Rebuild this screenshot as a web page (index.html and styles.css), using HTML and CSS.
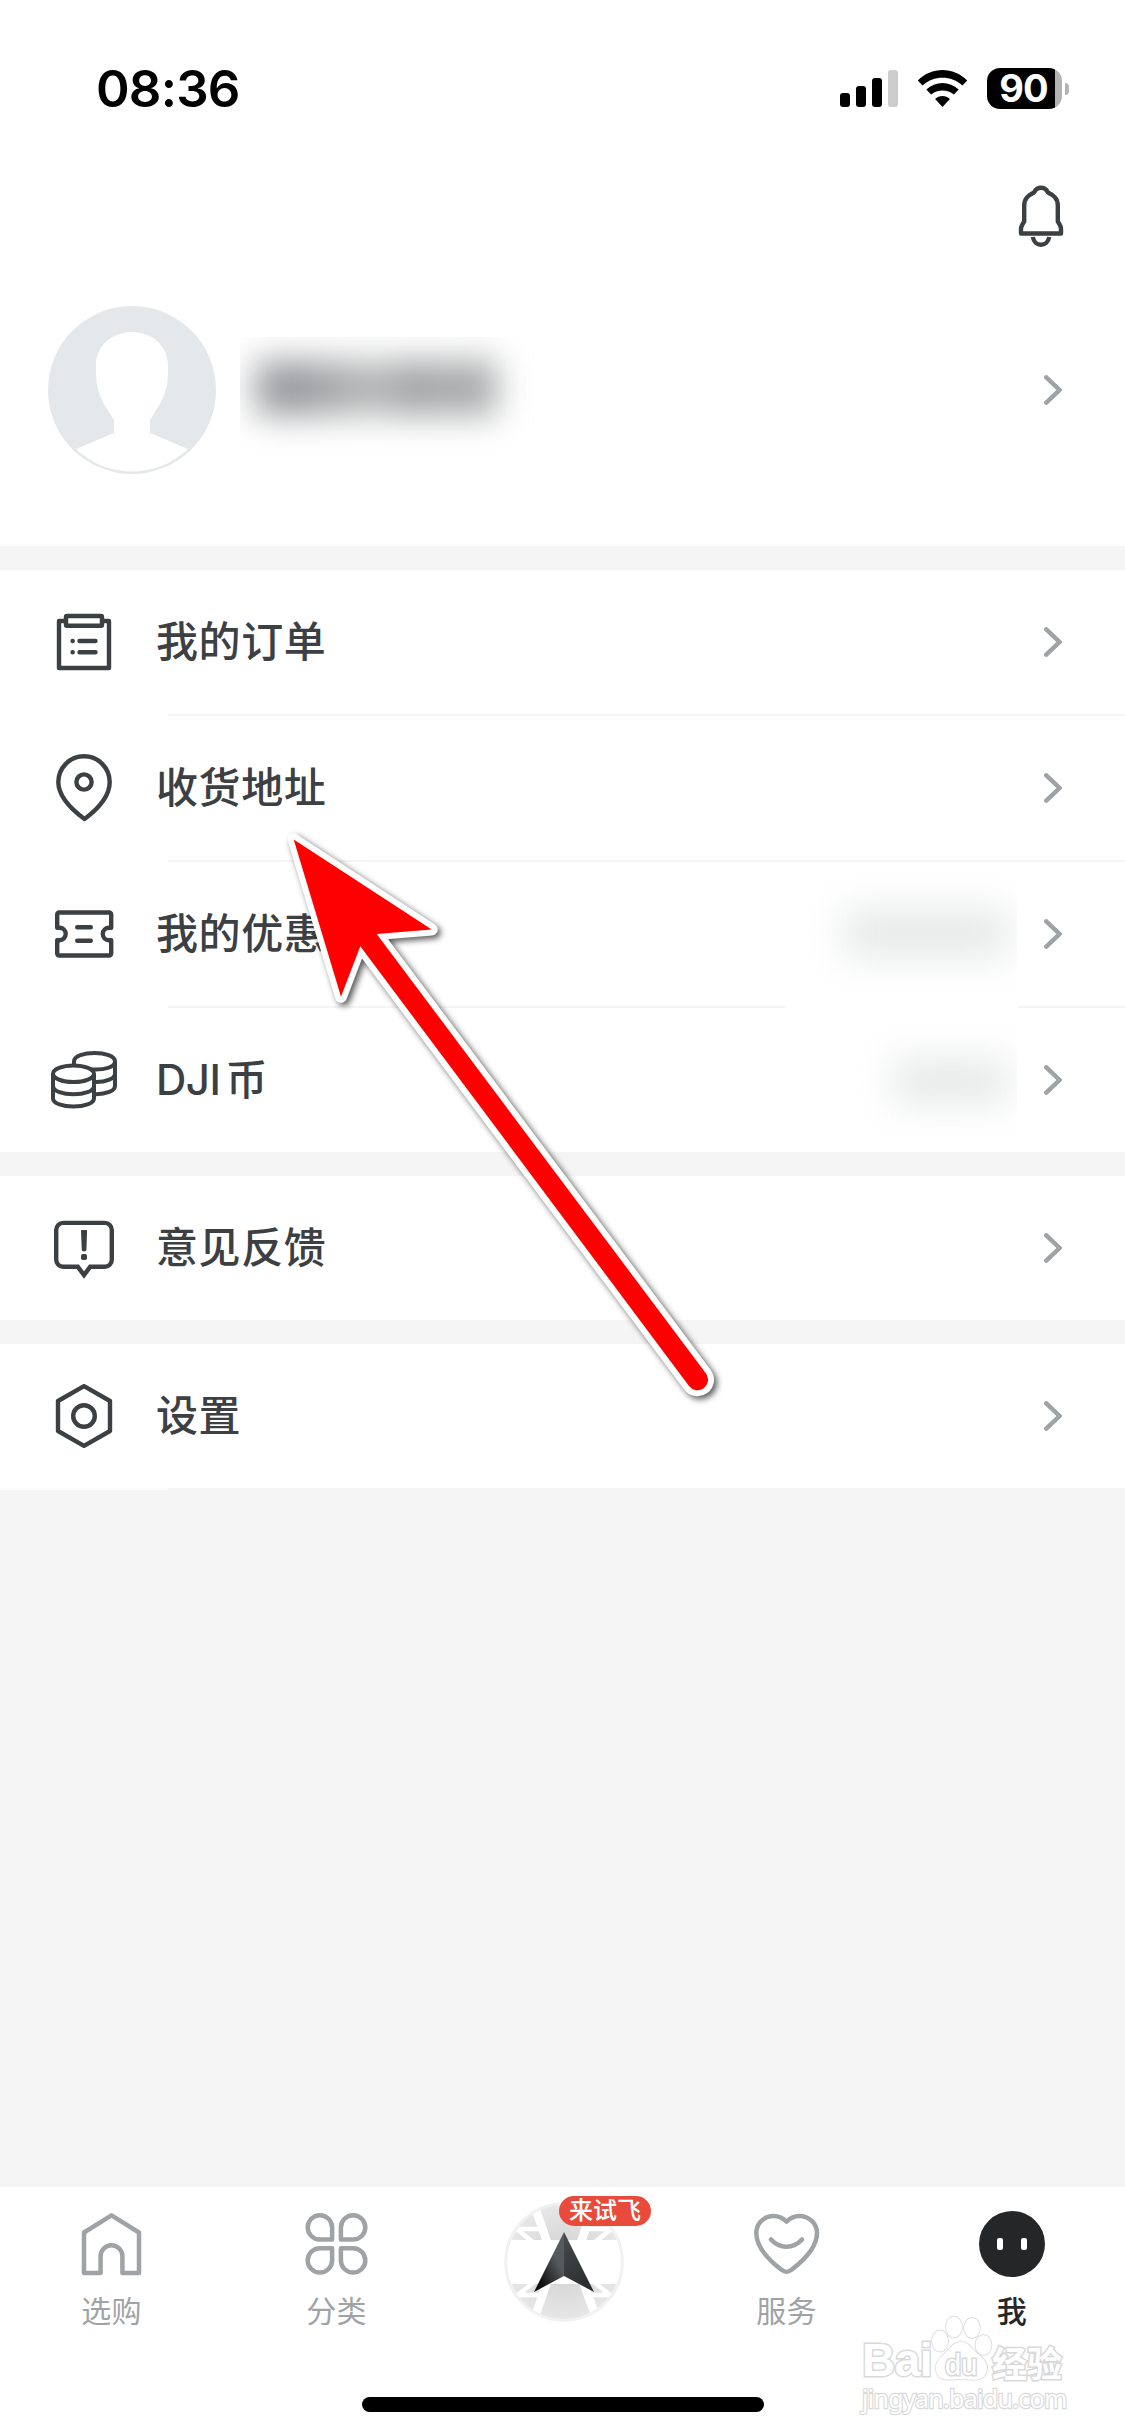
FILE: index.html
```html
<!DOCTYPE html>
<html lang="zh-CN">
<head>
    <meta charset="UTF-8">
    <meta name="viewport" content="width=device-width, initial-scale=1.0">
    <title>我</title>
    <link rel="stylesheet" href="styles.css">
</head>
<body>

    <div class="app">
        <header class="header">
            <div class="status-bar">
                <span class="time">08:36</span>
                <div class="status-icons">
                    <svg class="signal" viewBox="0 0 58 37">
                        <rect x="0" y="23" width="10" height="14" rx="3"/>
                        <rect x="16" y="16" width="10" height="21" rx="3"/>
                        <rect x="32" y="8" width="10" height="29" rx="3"/>
                        <rect x="48" y="0" width="10" height="37" rx="3" fill="#ccc"/>
                    </svg>
                    <svg class="wifi" viewBox="0 0 50 37">
                        <path d="M0.3 10.5 C14 -3.5 36 -3.5 49.7 10.5 L45 15.5 C34 5 16 5 5 15.5 Z"/>
                        <path d="M8.8 19.6 C18 10.8 32 10.8 41.2 19.6 L36.4 24.6 C30 19 20 19 13.6 24.6 Z"/>
                        <path d="M17.6 29 C21.5 24.9 28.5 24.9 32.4 29 L25 37 Z"/>
                    </svg>
                    <div class="battery"><span>90</span></div>
                    <div class="battery-cap"></div>
                </div>
            </div>

            <div class="toolbar">
                <svg class="icon" viewBox="0 0 72 72">
                    <path d="M36 7.8 C40 7.8 41.5 9.5 43 12.5 C48 15 52.8 18 52.8 25.5 V41.5 C54.5 44 56 46.5 56 49 V53.5 H16 V49 C16 46.5 17.5 44 19.2 41.5 V25.5 C19.2 18 24 15 29 12.5 C30.5 9.5 32 7.8 36 7.8 Z"/>
                    <path stroke-linecap="butt" d="M27.8 57 C29.5 67.3 42.5 67.3 44.2 57"/>
                </svg>
            </div>

            <div class="profile">
                <svg class="avatar" viewBox="0 0 168 168">
                    <circle cx="84" cy="84" r="84" fill="#e4e8eb"/>
                    <path fill="#fff" d="M84 26 C105 26 120 41 120 59 V68 C120 87 112 98 102 114 V127 L140 143 C109 173 59 173 28 143 L66 127 V114 C56 98 48 87 48 68 V59 C48 41 63 26 84 26 Z"/>
                </svg>
                <div class="hidden-name">
                    <div class="smudge"></div>
                </div>
                <svg class="chevron" viewBox="0 0 18 30"><path d="M2.3 2.3 L15.5 15 L2.3 27.7"/></svg>
            </div>
        </header>

        <main class="menu">
            <section class="group">
                <div class="item">
                    <svg class="icon" viewBox="0 0 72 72">
                        <path d="M18 15 H11 V62 H61 V15 H54"/>
                        <rect x="18" y="10" width="36" height="9.7" rx="1"/>
                        <path d="M24.6 35 h.1 M24.6 46.2 h.1 M31.5 35 H47.5 M31.5 46.2 H47.5"/>
                    </svg>
                    <span class="label">我的订单</span>
                    <svg class="chevron" viewBox="0 0 18 30"><path d="M2.3 2.3 L15.5 15 L2.3 27.7"/></svg>
                </div>
                <div class="item">
                    <svg class="icon" viewBox="0 0 72 72">
                        <path d="M36.5 67 C25 58.5 10.3 45 10.3 30 A25.7 25.7 0 0 1 61.7 30 C61.7 45 48 58.5 36.5 67 Z"/>
                        <circle cx="36" cy="30" r="7.6"/>
                    </svg>
                    <span class="label">收货地址</span>
                    <svg class="chevron" viewBox="0 0 18 30"><path d="M2.3 2.3 L15.5 15 L2.3 27.7"/></svg>
                </div>
                <div class="item">
                    <svg class="icon" viewBox="0 0 72 72">
                        <path d="M9.2 29.8 V16.5 a2 2 0 0 1 2 -2 H61.2 a2 2 0 0 1 2 2 V29.8 H61 a6.2 6.2 0 0 0 0 12.4 H63.2 V55.5 a2 2 0 0 1 -2 2 H11.2 a2 2 0 0 1 -2 -2 V42.2 H11.5 a6.2 6.2 0 0 0 0 -12.4 Z"/>
                        <path d="M29.2 29.2 H42.8 M29.2 42.8 H42.8"/>
                    </svg>
                    <span class="label">我的优惠</span>
                    <div class="hidden-value"><div class="smudge"></div></div>
                    <svg class="chevron" viewBox="0 0 18 30"><path d="M2.3 2.3 L15.5 15 L2.3 27.7"/></svg>
                </div>
                <div class="item">
                    <svg class="icon coins" viewBox="0 0 72 72">
                        <ellipse cx="25.5" cy="29.7" rx="20.5" ry="8.3"/>
                        <path d="M5 29.7 V54.2 C5 65.3 46 65.3 46 54.2 V29.7"/>
                        <path d="M5 42 C5 53.1 46 53.1 46 42"/>
                        <path d="M26 22 V17.4 C26 6.3 67 6.3 67 17.4 C67 23 57 26.3 42 25.2"/>
                        <path d="M67 17.4 V42 C67 47 58 50.2 48 50.2"/>
                        <path d="M67 29.7 C67 34.5 58 38 48 38"/>
                    </svg>
                    <span class="label"><span class="latin">DJI</span>币</span>
                    <div class="hidden-value short"><div class="smudge"></div></div>
                    <svg class="chevron" viewBox="0 0 18 30"><path d="M2.3 2.3 L15.5 15 L2.3 27.7"/></svg>
                </div>
            </section>

            <section class="group">
                <div class="item">
                    <svg class="icon" viewBox="0 0 72 72">
                        <path stroke-linejoin="miter" d="M15.2 10.9 H56.8 a7 7 0 0 1 7 7 V47.8 a7 7 0 0 1 -7 7 H42.2 L36 63 L29.8 54.8 H15.2 a7 7 0 0 1 -7 -7 V17.9 a7 7 0 0 1 7 -7 Z"/>
                        <path class="solid" d="M33.9 18 H38.3 Q39.2 18 39.1 19 L38.4 38 Q38.3 39.3 37 39.3 H35.2 Q33.9 39.3 33.8 38 L33 19 Q33 18 33.9 18 Z"/>
                        <rect class="solid" x="33" y="42" width="6" height="6" rx="1.8"/>
                    </svg>
                    <span class="label">意见反馈</span>
                    <svg class="chevron" viewBox="0 0 18 30"><path d="M2.3 2.3 L15.5 15 L2.3 27.7"/></svg>
                </div>
            </section>

            <section class="group last">
                <div class="item">
                    <svg class="icon" viewBox="0 0 72 72">
                        <path d="M36 6.2 L62 21 V51 L36 65.8 L10 51 V21 Z"/>
                        <circle cx="36" cy="36" r="10.8"/>
                    </svg>
                    <span class="label">设置</span>
                    <svg class="chevron" viewBox="0 0 18 30"><path d="M2.3 2.3 L15.5 15 L2.3 27.7"/></svg>
                </div>
            </section>
        </main>

        <footer class="footer">
            <nav class="tabs">
                <div class="tab">
                    <svg class="tab-icon" viewBox="0 0 66 66">
                        <path d="M32.5 4.3 L60 21.5 V62 H43.4 V45.2 a10.9 10.9 0 0 0 -21.8 0 V62 H5 V21.5 Z"/>
                    </svg>
                    <span>选购</span>
                </div>
                <div class="tab">
                    <svg class="tab-icon" viewBox="0 0 66 66">
                        <path d="M15.9 4.2 a12.2 12.2 0 0 0 0 24.4 H28.1 V16.4 A12.2 12.2 0 0 0 15.9 4.2 Z"/>
                        <path d="M49.1 4.2 a12.2 12.2 0 0 1 0 24.4 H36.9 V16.4 A12.2 12.2 0 0 1 49.1 4.2 Z"/>
                        <path d="M15.9 61.6 a12.2 12.2 0 0 1 0 -24.4 H28.1 V49.4 A12.2 12.2 0 0 1 15.9 61.6 Z"/>
                        <path d="M49.1 61.6 a12.2 12.2 0 0 0 0 -24.4 H36.9 V49.4 A12.2 12.2 0 0 0 49.1 61.6 Z"/>
                    </svg>
                    <span>分类</span>
                </div>
                <div class="tab fly">
                    <svg class="fly-icon" viewBox="0 0 120 120">
                        <defs>
                            <clipPath id="map"><circle cx="60" cy="60" r="57"/></clipPath>
                            <linearGradient id="wing-left" x1="1" y1="0" x2="0" y2="1">
                                <stop offset="0.35" stop-color="#565a5c"/>
                                <stop offset="0.8" stop-color="#111"/>
                            </linearGradient>
                            <linearGradient id="wing-right" x1="0" y1="0" x2="0.6" y2="1">
                                <stop offset="0" stop-color="#484b4d"/>
                                <stop offset="1" stop-color="#2b2e2e"/>
                            </linearGradient>
                            <radialGradient id="land">
                                <stop offset="0.3" stop-color="#d6d6d6"/>
                                <stop offset="1" stop-color="#e8e8e8"/>
                            </radialGradient>
                        </defs>
                        <circle cx="60" cy="60" r="58.3" fill="#fff" stroke="#f1f1f1" stroke-width="3"/>
                        <g clip-path="url(#map)">
                            <rect width="120" height="120" fill="url(#land)"/>
                            <rect y="38" width="120" height="44" fill="#fff"/>
                            <g stroke="#fff" fill="none">
                                <path stroke-width="8.5" d="M31 5 L43 40 M79 80 L92 115 M89 5 L77 40 M43 80 L31 115"/>
                                <path stroke-width="4.5" d="M8 27 H38 M82 27 H112 M8 93 H37 M80 93 H112 M10 25 L34 44 M110 25 L86 44 M10 96 L34 77 M110 96 L86 77"/>
                            </g>
                        </g>
                        <path d="M60 30 L30 90 L60 74 Z" fill="url(#wing-left)"/>
                        <path d="M60 30 L90 90 L60 74 Z" fill="url(#wing-right)"/>
                    </svg>
                    <em class="badge">来试飞</em>
                </div>
                <div class="tab">
                    <svg class="tab-icon" viewBox="0 0 66 66">
                        <path d="M32.5 10.6 C28.5 6.8 24.5 5 19.8 5 C10 5 2.3 12.5 2.3 22 C2.3 37 16 50 27.5 58.8 C31.3 61.7 33.8 61.7 37.5 58.8 C49 50 63 37 63 22 C63 12.5 55 5 45.3 5 C40.5 5 36.5 6.8 32.5 10.6 Z"/>
                        <path d="M17 28.5 C25.5 38 39.5 38 48 28.5"/>
                    </svg>
                    <span>服务</span>
                </div>
                <div class="tab active">
                    <svg class="tab-face" viewBox="0 0 66 66">
                        <circle cx="33" cy="33" r="33" fill="#242628"/>
                        <rect x="18" y="27" width="6" height="12" rx="2" fill="#fff"/>
                        <rect x="42" y="27" width="6" height="12" rx="2" fill="#fff"/>
                    </svg>
                    <span>我</span>
                </div>
            </nav>
            <div class="home-indicator"></div>
        </footer>

        <!-- Pointer over the address row -->
        <svg class="pointer" viewBox="0 0 460 600">
            <path d="M23.7 29.6 L161.7 119.5 L106.7 124 L436 563.5 A10.5 10.5 0 0 1 419 576 L90.3 136.2 L71 186.8 Z"/>
        </svg>

        <!-- Watermark -->
        <div class="watermark">
            <div class="mark-row">
                <span class="mark-bai">Bai</span>
                <div class="paw">
                    <svg viewBox="0 0 62 68">
                        <ellipse cx="9" cy="26" rx="8" ry="10.5"/>
                        <ellipse cx="23" cy="12" rx="8" ry="10.5"/>
                        <ellipse cx="41" cy="13" rx="8" ry="10"/>
                        <ellipse cx="52.5" cy="30" rx="8" ry="10"/>
                        <path d="M30 27 C38 27 41 34 47 39 C53 44 57 48 56 55 C54 66 44 65 38 64.5 C32 64 28 64 22 64.5 C14 65 6 65 5 55 C4 48 8 43 13 39 C19 34 22 27 30 27 Z"/>
                    </svg>
                    <span>du</span>
                </div>
                <span class="mark-cn">经验</span>
            </div>
            <div class="mark-url">jingyan.baidu.com</div>
        </div>
    </div>

</body>
</html>
```
FILE: styles.css
```css
* {
    margin: 0;
    padding: 0;
    box-sizing: border-box;
}

body {
    font-family: Inter, "Noto Sans CJK SC", sans-serif;
    background-color: #f5f5f5;
    color: #3c4043;
}

svg {
    display: block;
    flex-shrink: 0;
}

.app {
    position: relative;
    width: 1125px;
    height: 2436px;
    display: flex;
    flex-direction: column;
    overflow: hidden;
}

/* Header */
.header {
    height: 546px;
    background-color: #fff;
}

.status-bar {
    height: 180px;
    padding: 62px 56px 0 96px;
    display: flex;
    justify-content: space-between;
    align-items: flex-start;
}

.time {
    font-size: 51px;
    font-weight: 600;
    line-height: 54px;
    letter-spacing: -0.8px;
    color: #000;
}

.status-icons {
    display: flex;
    align-items: center;
    height: 53px;
}

.signal {
    width: 58px;
    height: 37px;
    margin-right: 19px;
}

.wifi {
    width: 51px;
    height: 37px;
    margin-right: 19px;
}

.battery {
    width: 75px;
    height: 41px;
    padding-right: 2px;
    border-radius: 13px;
    background: linear-gradient(to right, #000 68px, #b3b3b3 68px);
    color: #fff;
    font-size: 38px;
    font-weight: 700;
    line-height: 41px;
    letter-spacing: -1px;
    text-align: center;
}

.battery-cap {
    width: 4px;
    height: 12px;
    margin-left: 3px;
    border-radius: 0 4px 4px 0;
    background-color: #b3b3b3;
}

.toolbar {
    height: 126px;
    padding-right: 48px;
    display: flex;
    justify-content: flex-end;
}

.profile {
    height: 168px;
    padding: 0 63px 0 48px;
    display: flex;
    align-items: center;
}

.avatar {
    width: 168px;
    height: 168px;
}

.hidden-name {
    width: 300px;
    height: 118px;
    margin: 12px 0 0 24px;
    padding: 24px 0 0 16px;
    overflow: hidden;
}

.hidden-name .smudge {
    width: 240px;
    height: 54px;
    background: linear-gradient(to right, #97999c 0, #97999c 50px, #adafb0 90px, #b5b7b7 128px, #9c9ea0 158px, #aaacad 190px, #a0a2a3 240px);
    filter: blur(17px);
}

/* Icons */
.icon {
    width: 72px;
    height: 72px;
    fill: none;
    stroke: #3c4043;
    stroke-width: 4.4;
    stroke-linecap: round;
    stroke-linejoin: round;
}

.icon .solid {
    fill: #3c4043;
    stroke: none;
}

.coins {
    stroke-width: 4;
    stroke-linecap: butt;
}

.chevron {
    width: 18px;
    height: 30px;
    margin-left: auto;
    fill: none;
    stroke: #a0a3a6;
    stroke-width: 4.4;
    stroke-linecap: round;
}

/* Menu */
.menu {
    flex: 1;
    padding-top: 24px;
}

.group {
    margin-bottom: 24px;
    background-color: #fff;
}

.item {
    position: relative;
    height: 144px;
    padding: 0 63px 0 48px;
    display: flex;
    align-items: center;
}

.item:not(:last-child),
.last .item {
    height: 146px;
    padding-bottom: 2px;
}

.item:not(:last-child)::after,
.last .item::after {
    content: "";
    position: absolute;
    left: 168px;
    right: 0;
    bottom: 0;
    height: 2px;
    background-color: #f5f5f5;
}

.label {
    margin-left: 36px;
    font-size: 42px;
    font-weight: 500;
    line-height: 60px;
    letter-spacing: 0.6px;
}

.latin {
    margin-right: 5px;
    letter-spacing: -0.5px;
}

/* Blurred amounts, they also cover a part of the divider */
.hidden-value {
    position: relative;
    z-index: 1;
    width: 231px;
    height: 132px;
    margin: 16px 27px 0 auto;
    padding: 32px 8px 0 0;
    overflow: hidden;
    background-color: #fff;
}

.hidden-value + .chevron {
    margin-left: 0;
}

.hidden-value .smudge {
    width: 165px;
    height: 50px;
    margin-left: auto;
    background-color: #e7e9e9;
    filter: blur(19px);
}

.hidden-value.short {
    height: 118px;
    margin-top: 0;
    padding-top: 37px;
}

.hidden-value.short .smudge {
    width: 116px;
    height: 46px;
}

/* Bottom tabs */
.footer {
    height: 249px;
    background-color: #fff;
}

.tabs {
    height: 210px;
    display: flex;
}

.tab {
    position: relative;
    width: 225px;
    padding: 24px 1px 0 0;
    display: flex;
    flex-direction: column;
    align-items: center;
    color: #a0a3a6;
    font-size: 30px;
    line-height: 40px;
}

.tab span {
    margin-top: 14px;
    letter-spacing: 0.3px;
}

.tab:not(.active) span {
    margin-right: 1px;
}

.tab-icon,
.tab-face {
    width: 66px;
    height: 66px;
}

.tab-icon {
    fill: none;
    stroke: #a0a3a6;
    stroke-width: 4.5;
    stroke-linecap: round;
    stroke-linejoin: round;
}

.tab.active {
    color: #242628;
    font-weight: 500;
}

.tab.fly {
    padding: 15px 0 0 3px;
}

.fly-icon {
    width: 120px;
    height: 120px;
}

.badge {
    position: absolute;
    left: 109px;
    top: 9px;
    width: 92px;
    height: 30px;
    border-radius: 15px;
    background-color: #e84a3b;
    color: #fff;
    font-size: 24px;
    font-style: normal;
    font-weight: 500;
    line-height: 30px;
    text-align: center;
}

.home-indicator {
    width: 402px;
    height: 15px;
    margin: 0 auto;
    border-radius: 8px;
    background-color: #000;
}

.pointer {
    position: absolute;
    left: 270px;
    top: 810px;
    z-index: 2;
    width: 460px;
    height: 600px;
    overflow: visible;
    fill: #f00;
    stroke: #fff;
    stroke-width: 12;
    stroke-linejoin: round;
    paint-order: stroke;
    filter: drop-shadow(3px 3px 3px rgba(0, 0, 0, 0.65));
}

/* Watermark */
.watermark {
    position: absolute;
    left: 862px;
    top: 2315px;
    color: #fff;
    -webkit-text-stroke: 3px #d9d9d9;
    paint-order: stroke;
}

.mark-row {
    height: 68px;
    display: flex;
    align-items: flex-end;
}

.mark-bai {
    width: 69px;
    font: bold 46px/46px "Liberation Sans", sans-serif;
    letter-spacing: -0.5px;
}

.paw {
    position: relative;
    width: 61px;
}

.paw svg {
    width: 62px;
    height: 68px;
    fill: #fff;
    stroke: #d9d9d9;
    stroke-width: 1.6;
}

.paw span {
    position: absolute;
    left: 14px;
    top: 36px;
    font: 29px/29px "Liberation Sans", sans-serif;
}

.mark-cn {
    font: bold 35px/42px "Noto Sans CJK SC", sans-serif;
}

.mark-url {
    font: 25px/30px "Noto Sans", sans-serif;
    letter-spacing: -0.7px;
    -webkit-text-stroke-width: 2.4px;
}
```
